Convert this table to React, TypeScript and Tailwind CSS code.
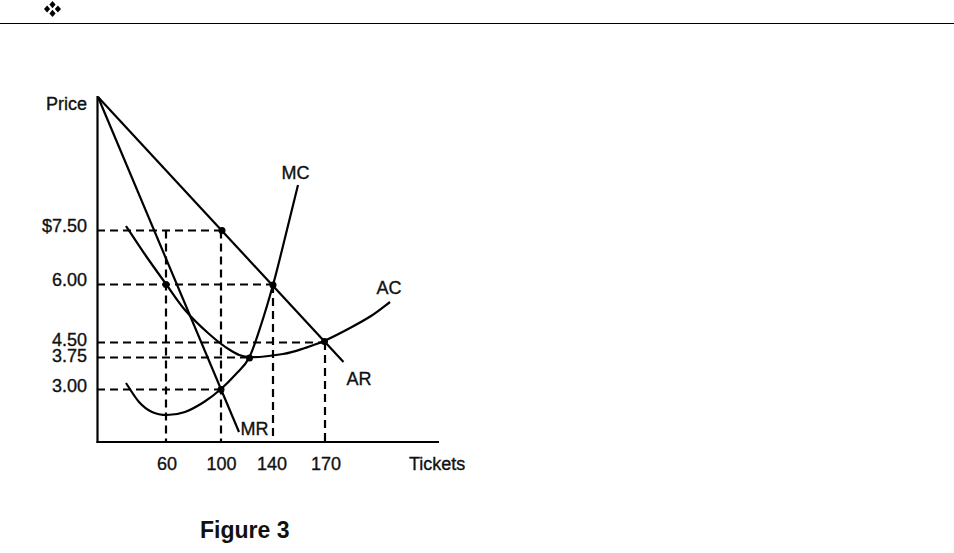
import React from "react";

type Pt = [number, number];

// catmull-rom through the sampled points, gives a smooth hand-drawn curve
function smooth(pts: Pt[]): string {
  let d = `M${pts[0][0]},${pts[0][1]}`;
  for (let i = 0; i < pts.length - 1; i++) {
    const p0 = pts[i - 1] || pts[i];
    const p1 = pts[i];
    const p2 = pts[i + 1];
    const p3 = pts[i + 2] || p2;
    const c1x = p1[0] + (p2[0] - p0[0]) / 6;
    const c1y = p1[1] + (p2[1] - p0[1]) / 6;
    const c2x = p2[0] - (p3[0] - p1[0]) / 6;
    const c2y = p2[1] - (p3[1] - p1[1]) / 6;
    d += ` C${c1x.toFixed(1)},${c1y.toFixed(1)} ${c2x.toFixed(1)},${c2y.toFixed(1)} ${p2[0]},${p2[1]}`;
  }
  return d;
}

const mc: Pt[] = [
  [126, 383], [139, 402], [152, 412], [167, 415], [185, 412], [204, 402],
  [221, 389], [236, 374], [249, 358], [261, 325], [273, 285], [282, 250], [298, 185],
];

const ac: Pt[] = [
  [126, 226], [146, 256], [166, 284], [185, 310], [208, 333], [230, 350],
  [249, 357], [283, 354], [305, 348], [324, 341], [350, 328], [371, 316], [390, 302],
];

const dashed: [number, number, number, number][] = [
  [97, 230.5, 222, 230.5],
  [97, 284.5, 273, 284.5],
  [97, 342.5, 325, 342.5],
  [97, 357.5, 250, 357.5],
  [97, 389.5, 221, 389.5],
  [166, 230.5, 166, 442],
  [221, 230.5, 221, 442],
  [273, 285, 273, 442],
  [325, 342, 325, 442],
];

const dots: Pt[] = [
  [222, 230.5], [166, 284.5], [273, 285], [324.5, 341.5], [249.5, 358], [221, 389.5],
];

const priceLabels: [string, number][] = [
  ["$7.50", 232],
  ["6.00", 285.5],
  ["4.50", 345.5],
  ["3.75", 362],
  ["3.00", 391.5],
];

const ticketLabels: [string, number][] = [
  ["60", 167],
  ["100", 221.5],
  ["140", 272],
  ["170", 326],
];

function Diamonds() {
  return (
    <svg width="17" height="16" viewBox="0 0 17 16" className="block">
      <g fill="#000">
        <path d="M8.5,0 L11.6,3.6 L8.5,7.2 L5.4,3.6 Z" />
        <path d="M3.1,4.4 L6.2,8 L3.1,11.6 L0,8 Z" />
        <path d="M13.9,4.4 L17,8 L13.9,11.6 L10.8,8 Z" />
        <path d="M8.5,8.8 L11.6,12.4 L8.5,16 L5.4,12.4 Z" />
      </g>
    </svg>
  );
}

function CostChart() {
  return (
    <svg
      width="480"
      height="476"
      viewBox="0 24 480 476"
      className="block"
      style={{ fontFamily: '"Liberation Sans", Arial, sans-serif' }}
    >
      <g stroke="#000" strokeWidth="2.2" fill="none" strokeLinecap="butt">
        {dashed.map(([x1, y1, x2, y2], i) => (
          <line key={i} x1={x1} y1={y1} x2={x2} y2={y2} strokeDasharray="8 5" />
        ))}
        {/* axes */}
        <line x1="97.5" y1="96" x2="97.5" y2="443" />
        <line x1="96.5" y1="442" x2="439" y2="442" />
        {/* AR and MR */}
        <line x1="98" y1="97" x2="343.5" y2="362" />
        <line x1="98" y1="97" x2="239" y2="432" />
        <path d={smooth(mc)} />
        <path d={smooth(ac)} />
      </g>
      <g fill="#000">
        {dots.map(([x, y], i) => (
          <circle key={i} cx={x} cy={y} r="3.5" />
        ))}
      </g>
      <g fill="#111" stroke="#111" strokeWidth="0.35" fontSize="18">
        <text x="87" y="110" textAnchor="end">Price</text>
        {priceLabels.map(([t, y]) => (
          <text key={t} x="87" y={y} textAnchor="end">{t}</text>
        ))}
        {ticketLabels.map(([t, x]) => (
          <text key={t} x={x} y="470" textAnchor="middle">{t}</text>
        ))}
        <text x="409" y="470">Tickets</text>
        <text x="281.5" y="178.5">MC</text>
        <text x="376.5" y="294">AC</text>
        <text x="346.5" y="385">AR</text>
        <text x="240.5" y="435">MR</text>
      </g>
    </svg>
  );
}

export default function App() {
  return (
    <div className="w-[954px] h-[553px] bg-white overflow-hidden">
      <div className="h-6 border-b-[1.5px] border-black pl-11 pt-px">
        <Diamonds />
      </div>
      <CostChart />
      <p className="mt-[19px] pl-[200px] text-[23px] leading-none font-bold text-[#111] font-['Liberation_Sans',Arial,sans-serif]">
        Figure 3
      </p>
    </div>
  );
}
